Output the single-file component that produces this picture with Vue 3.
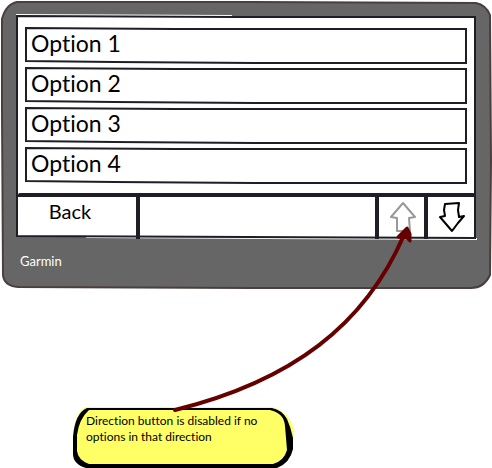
<script setup>
const options = ['Option 1', 'Option 2', 'Option 3', 'Option 4']
</script>

<template>
  <main class="canvas">
    <section class="device">
      <svg class="sketch" viewBox="0 0 490 288" preserveAspectRatio="none" aria-hidden="true">
        <path class="shell" d="M16 1 L250 1 L474 2 Q484 4 488 14 L489 160 L488 274 Q482 287 469 287 L250 287 L17 286 Q3 285 2 274 L1 110 L1 18 Q5 3 16 1Z" />
      </svg>
      <div class="screen">
        <svg class="sketch" viewBox="0 0 461 224" preserveAspectRatio="none" aria-hidden="true">
          <path class="halo" d="M0 0 L216 1 M70 222 L250 223 L461 224" />
          <path class="glass" d="M1 1 L220 2 L459 2 L459 110 L459 223 L230 222 L1 221 L1 110Z" />
        </svg>
        <ul class="options">
          <li v-for="option in options" :key="option">
            <button class="option" type="button">
              <svg class="sketch" viewBox="0 0 442 38" preserveAspectRatio="none" aria-hidden="true">
                <path class="box" d="M2 1 L150 2 L441 2 L441 36 L230 36 L90 35 L2 34Z" />
              </svg>
              <span class="label">{{ option }}</span>
            </button>
          </li>
        </ul>
        <nav class="bar">
          <button class="cell back" type="button">Back</button>
          <div class="cell spacer"></div>
          <button class="cell up" type="button" disabled aria-label="Scroll up">
            <svg width="28" height="32" viewBox="0 0 28 32" aria-hidden="true">
              <path class="arrow muted" d="M15 2 L9 9 L3 16 L9 17 L9 30 L22 30 L21 17 L27 16 L21 9Z" />
            </svg>
          </button>
          <button class="cell down" type="button" aria-label="Scroll down">
            <svg width="28" height="32" viewBox="0 0 28 32" aria-hidden="true">
              <path class="arrow" d="M7 3 L21 2 L20 9 L21 16 L26 15 L20 22 L14 30 L8 23 L2 16 L7 15 L6 9Z" />
            </svg>
          </button>
        </nav>
      </div>
      <p class="brand">Garmin</p>
    </section>

    <aside class="note">
      <svg class="sketch" viewBox="0 0 222 61" preserveAspectRatio="none" aria-hidden="true">
        <path fill="#ffff66" d="M14 0 L200 0 Q210 2 217 12 Q222 18 222 28 L218 44 Q216 56 204 60 L15 60 Q3 55 2 48 L1 27 Q3 5 14 0Z" />
        <path fill="#000" fill-rule="evenodd" d="M15 1 L200 1 Q210 3 215 12 Q219 21 221 31 L221 42 Q218 56 205 61 L14 61 Q1 57 1 47 L1 30 Q3 6 15 1Z M17 3 Q7 12 5 28 L5 44 Q6 53 17 57 L201 57 Q212 54 215 43 L213 19 Q212 6 198 3Z" />
      </svg>
      <p class="note-text">Direction button is disabled if no options in that direction</p>
    </aside>

    <svg class="pointer" width="492" height="468" viewBox="0 0 492 468" aria-hidden="true">
      <path class="curve" d="M175 410 C292 381 365 325 404 235" />
      <path class="head" d="M407 228 L398 237 L403 238 L407 238 L410 241 L410 234Z" />
    </svg>
  </main>
</template>

<style>
body {
  margin: 0;
  background: #fff;
}
</style>

<style scoped>
.canvas {
  position: relative;
  min-height: 468px;
  padding: 1px 0 0 1px;
  box-sizing: border-box;
  overflow: hidden;
  font-family: Lato, "Open Sans", sans-serif;
  font-variant-ligatures: none;
  color: #000;
}

.sketch {
  position: absolute;
  inset: 0;
  width: 100%;
  height: 100%;
  overflow: visible;
}

.sketch path {
  vector-effect: non-scaling-stroke;
}

.device {
  position: relative;
  padding: 14px 15px 19px;
}

.shell {
  fill: #666;
  stroke: #4b3e3e;
  stroke-width: 2;
}

.screen {
  position: relative;
}

.glass {
  fill: #fff;
  stroke: #1e1f26;
  stroke-width: 2;
}

.halo {
  fill: none;
  stroke: #fff;
  stroke-width: 2;
}

.options {
  position: relative;
  display: grid;
  gap: 2px;
  margin: 0;
  padding: 12px 10px 8px 8px;
  list-style: none;
}

.option {
  position: relative;
  display: block;
  width: 100%;
  height: 38px;
  padding: 0 7px 6px;
  border: 0;
  background: none;
  font: inherit;
  font-size: 23px;
  line-height: 32px;
  color: inherit;
  text-align: left;
}

.box {
  fill: #fff;
  stroke: #1e1f26;
  stroke-width: 2;
}

.label {
  position: relative;
}

.bar {
  position: relative;
  display: flex;
  height: 46px;
  margin: 0 2px;
  box-sizing: border-box;
  border-top: 4px solid #1e1f26;
  border-radius: 2px;
}

.cell {
  display: flex;
  box-sizing: border-box;
  justify-content: center;
  padding: 0;
  border: 0;
  border-right: 4px solid #1e1f26;
  background: none;
  font: inherit;
  color: inherit;
}

.back {
  width: 122px;
  padding: 2px 14px 0 0;
  font-size: 20px;
  line-height: 24px;
}

.spacer {
  flex: 1;
}

.up {
  width: 49px;
  padding-top: 4px;
}

.down {
  width: 47px;
  padding-top: 4px;
  border-right: 0;
}

.arrow {
  fill: #fff;
  stroke: #000;
  stroke-width: 2;
  stroke-linejoin: round;
}

.muted {
  stroke: #999;
}

.brand {
  position: relative;
  margin: 13px 0 0 4px;
  font-size: 13px;
  line-height: 18px;
  color: #fff;
}

.note {
  position: relative;
  width: 222px;
  min-height: 61px;
  margin: 118px 0 0 71px;
  padding: 6px 20px 16px 14px;
  box-sizing: border-box;
}

.note-text {
  position: relative;
  margin: 0;
  font-size: 12px;
  line-height: 16px;
}

.pointer {
  position: absolute;
  top: 0;
  left: 0;
  pointer-events: none;
}

.curve {
  fill: none;
  stroke: #600;
  stroke-width: 4;
  stroke-linecap: round;
}

.head {
  fill: #600;
  stroke: #600;
  stroke-width: 3;
  stroke-linejoin: round;
}
</style>
